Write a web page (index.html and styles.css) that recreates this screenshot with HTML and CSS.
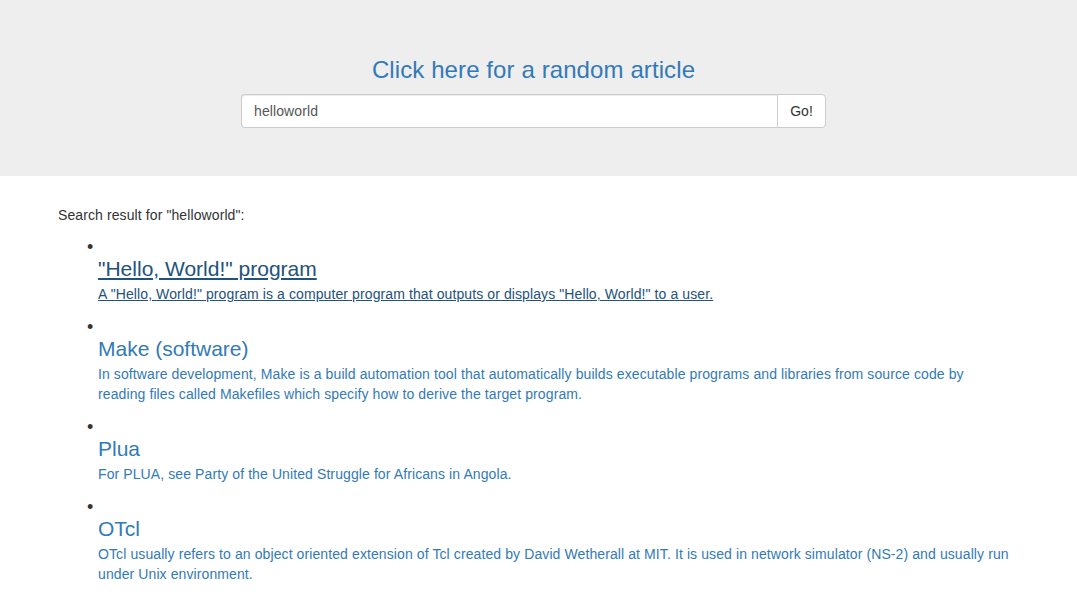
FILE: index.html
```html
<!DOCTYPE html>
<html lang="en">
<head>
<meta charset="utf-8">
<title>Wikipedia Viewer</title>
<link rel="stylesheet" href="styles.css">
</head>
<body>
<header class="jumbotron">
  <div class="container">
    <h1 class="random"><a href="#">Click here for a random article</a></h1>
    <form class="search">
      <input class="search-input" type="text" value="helloworld">
      <button class="search-btn" type="button">Go!</button>
    </form>
  </div>
</header>
<main class="container container-results">
  <p class="result-label">Search result for "helloworld":</p>
  <ul class="results">
    <li>
      <a class="result active" href="#">
        <span class="result-title">"Hello, World!" program</span>
        <span class="result-desc">A "Hello, World!" program is a computer program that outputs or displays "Hello, World!" to a user.</span>
      </a>
    </li>
    <li>
      <a class="result" href="#">
        <span class="result-title">Make (software)</span>
        <span class="result-desc">In software development, Make is a build automation tool that automatically builds executable programs and libraries from source code by reading files called Makefiles which specify how to derive the target program.</span>
      </a>
    </li>
    <li>
      <a class="result" href="#">
        <span class="result-title">Plua</span>
        <span class="result-desc">For PLUA, see Party of the United Struggle for Africans in Angola.</span>
      </a>
    </li>
    <li>
      <a class="result" href="#">
        <span class="result-title">OTcl</span>
        <span class="result-desc">OTcl usually refers to an object oriented extension of Tcl created by David Wetherall at MIT. It is used in network simulator (NS-2) and usually run under Unix environment.</span>
      </a>
    </li>
  </ul>
</main>
</body>
</html>
```

FILE: styles.css
```css
* {
  box-sizing: border-box;
}

html, body {
  margin: 0;
  padding: 0;
}

body {
  font-family: "Liberation Sans", Arial, Helvetica, sans-serif;
  font-size: 14px;
  line-height: 20px;
  letter-spacing: 0.1px;
  color: #333;
  background: #fff;
}

a {
  color: #337ab7;
  text-decoration: none;
}

.container {
  padding: 0 68px 0 58px;
}

.container-results {
  padding-right: 65px;
}

.jumbotron {
  background: #eeeeee;
  padding: 57px 0 48px;
}

.random {
  margin: 0;
  font-size: 24px;
  line-height: 26px;
  font-weight: normal;
  text-align: center;
}

.search {
  display: flex;
  width: 585px;
  height: 34px;
  margin: 11px auto 0;
}

.search-input {
  flex: 1;
  min-width: 0;
  height: 34px;
  margin: 0;
  padding: 6px 12px;
  font-family: inherit;
  font-size: 14px;
  line-height: 20px;
  letter-spacing: 0.1px;
  color: #555;
  background: #fff;
  border: 1px solid #ccc;
  border-right: 0;
  border-radius: 4px 0 0 4px;
  box-shadow: inset 0 1px 1px rgba(0, 0, 0, 0.075);
  outline: none;
}

.search-btn {
  height: 34px;
  margin: 0;
  padding: 6px 12px;
  font-family: inherit;
  font-size: 14px;
  line-height: 20px;
  letter-spacing: 0.1px;
  color: #333;
  background: #fff;
  border: 1px solid #ccc;
  border-radius: 0 4px 4px 0;
}

.result-label {
  margin: 29px 0 10px;
}

.results {
  margin: 0;
  padding-left: 40px;
  list-style: none;
}

.results li::before {
  content: "\2022";
  display: block;
  height: 20px;
  margin-left: -11px;
  font-size: 18px;
  line-height: 24px;
  color: #333;
}

.result {
  display: block;
  margin-bottom: 11px;
}

.result-title {
  display: block;
  margin-bottom: 1px;
  font-size: 21px;
  line-height: 28px;
  letter-spacing: 0;
}

.result-desc {
  display: block;
}

.result.active {
  color: #23527c;
  text-decoration: underline;
}
```
